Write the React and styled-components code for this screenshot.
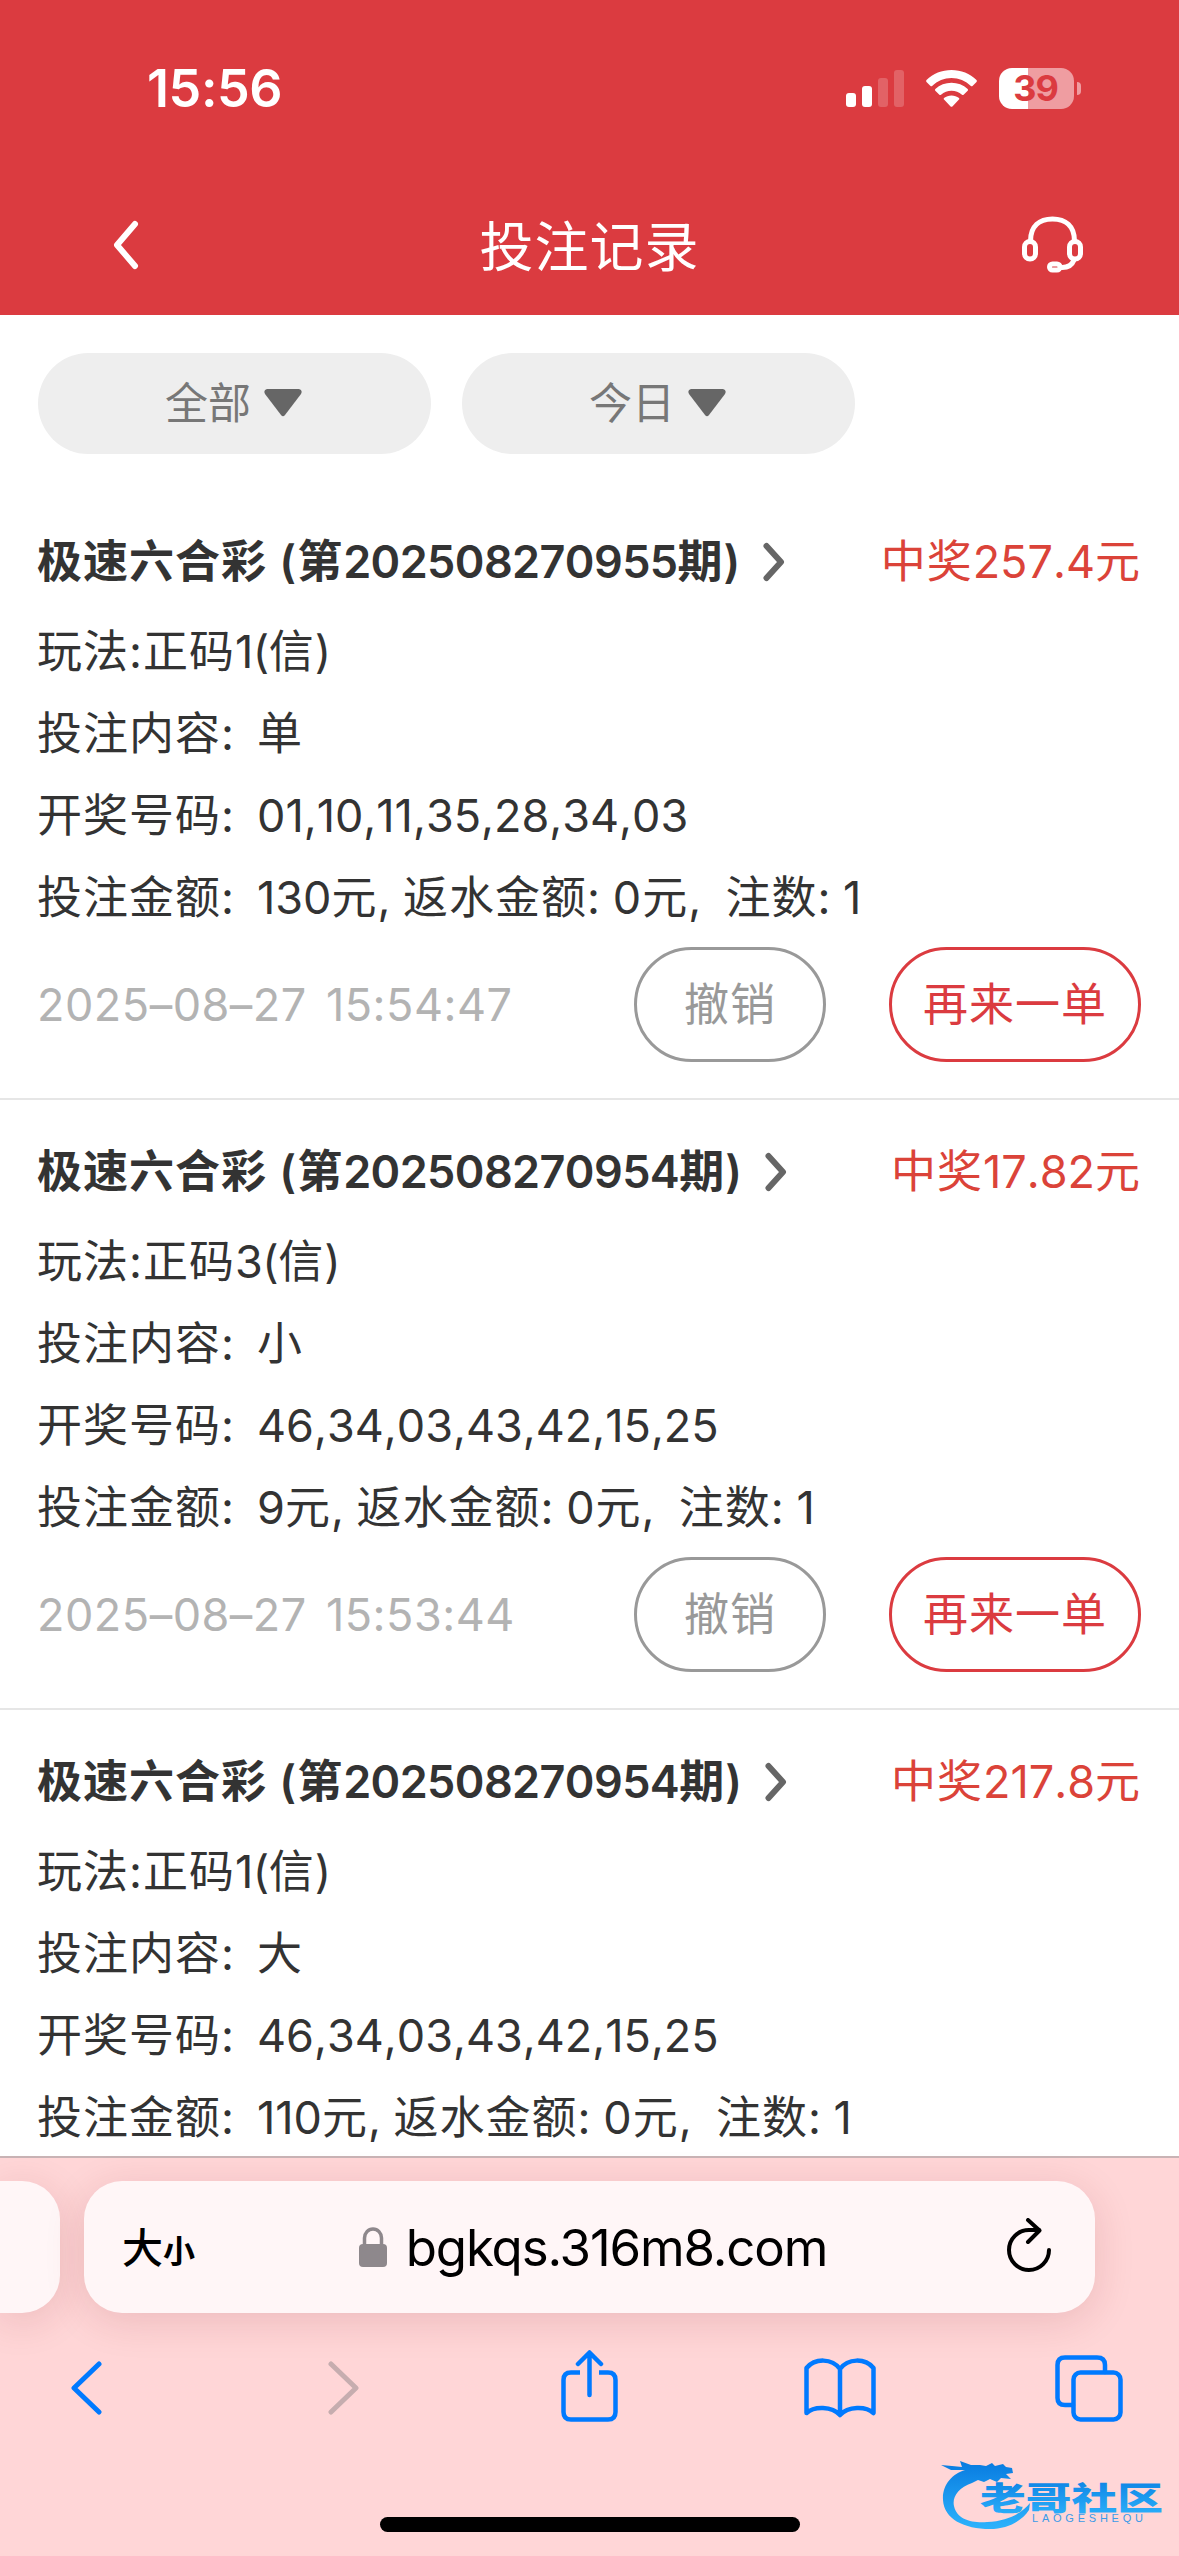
import styled, { createGlobalStyle } from "styled-components";

const GlobalStyle = createGlobalStyle`
  * {
    box-sizing: border-box;
  }
  body {
    margin: 0;
    background: #fff;
    font-family: Inter, "Noto Sans CJK SC", sans-serif;
    font-feature-settings: "calt" 0;
    color: #333;
  }
`;

const Screen = styled.div`
  position: relative;
  width: 1179px;
  height: 2556px;
  display: flex;
  flex-direction: column;
  overflow: hidden;
  background: #fff;
`;

const Header = styled.header`
  height: 315px;
  flex-shrink: 0;
  background: #db3b40;
  color: #fff;
`;

const StatusBar = styled.div`
  height: 176px;
  padding: 0 98px 0 147px;
  display: flex;
  align-items: center;
  justify-content: space-between;
`;

const Clock = styled.span`
  font-size: 52px;
  font-weight: 600;
  line-height: 60px;
  letter-spacing: -0.4px;
  padding-top: 2px;
`;

const StatusIcons = styled.div`
  display: flex;
  align-items: center;
  gap: 22px;
`;

const Signal = styled.div`
  display: flex;
  align-items: flex-end;
  gap: 6px;
  height: 37px;
`;

const Bar = styled.i`
  width: 10px;
  height: ${(p) => p.$h}px;
  border-radius: 3px;
  background: ${(p) => (p.$on ? "#fff" : "rgba(255, 255, 255, 0.2)")};
`;

const BatteryWrap = styled.div`
  display: flex;
  align-items: center;
  gap: 3px;
`;

const Battery = styled.div`
  width: 75px;
  height: 41px;
  padding-right: 2px;
  border-radius: 13px;
  background: linear-gradient(to right, #fff 29px, #ef9da1 29px);
  color: #db3b40;
  font-size: 36px;
  font-weight: 700;
  line-height: 41px;
  letter-spacing: -1px;
  text-align: center;
`;

const BatteryTip = styled.i`
  width: 4px;
  height: 13px;
  border-radius: 0 4px 4px 0;
  background: #ef9da1;
`;

const NavBar = styled.div`
  height: 139px;
  padding: 0 96px;
  display: grid;
  grid-template-columns: 1fr auto 1fr;
  align-items: center;
`;

const NavLeft = styled.div`
  display: flex;
  padding: 0 0 2px 16px;
`;

const NavTitle = styled.h1`
  margin: 0;
  padding-top: 4px;
  font-size: 54px;
  font-weight: 400;
  line-height: 64px;
  letter-spacing: 1px;
`;

const NavRight = styled.div`
  display: flex;
  justify-content: flex-end;
  padding-bottom: 2px;
`;

const Main = styled.main`
  height: 1841px;
  flex-shrink: 0;
  overflow: hidden;
`;

const Filters = styled.div`
  display: flex;
  gap: 31px;
  padding: 38px 38px 0;
`;

const FilterPill = styled.div`
  width: 393px;
  height: 101px;
  padding: 0 2px 2px 0;
  border-radius: 51px;
  background: #eee;
  color: #777;
  display: flex;
  align-items: center;
  justify-content: center;
  gap: 13px;
  font-size: 43px;
  line-height: 50px;
`;

const Records = styled.div`
  padding-top: 36px;
`;

const Card = styled.section`
  height: 610px;
  padding: 22px 38px 0 37px;
  border-bottom: 2px solid #e6e6e6;
  font-size: 45px;
  letter-spacing: 1px;
  line-height: 82px;
`;

const CardHead = styled.div`
  height: 99px;
  display: flex;
  align-items: center;
  line-height: 60px;
`;

const Game = styled.strong`
  font-weight: 600;
  white-space: pre;
`;

const Digits = styled.span`
  letter-spacing: ${(p) => p.$track || 0}px;
  font-kerning: none;
`;

const Arrow = styled.span`
  display: flex;
  margin-left: 22px;
`;

const Prize = styled.span`
  margin-left: auto;
  color: #db4339;
`;

const Line = styled.div`
  height: 82px;
  display: flex;
  white-space: pre;
  word-spacing: -2px;
`;

const Label = styled.span`
  width: 220px;
`;

const CardFoot = styled.div`
  height: 115px;
  margin-top: 8px;
  display: flex;
  align-items: center;
`;

const Time = styled.time`
  color: #b3b3b3;
  margin-right: auto;
  letter-spacing: 0.5px;
  word-spacing: 6px;
  white-space: pre;
`;

const Button = styled.button`
  width: ${(p) => p.$w}px;
  height: 115px;
  padding: 0;
  margin-left: 63px;
  border: 3px solid currentColor;
  border-radius: 58px;
  background: #fff;
  color: ${(p) => p.$color};
  font: inherit;
  letter-spacing: inherit;
`;

const Browser = styled.footer`
  flex: 1;
  border-top: 2px solid #c9b3b5;
  background: #ffd6d7;
  display: flex;
  flex-direction: column;
  align-items: center;
`;

const AddressRow = styled.div`
  align-self: stretch;
  display: flex;
  gap: 24px;
  padding-top: 23px;
`;

const TabPeek = styled.div`
  width: 60px;
  height: 132px;
  border-radius: 0 38px 38px 0;
  background: #fff6f7;
  box-shadow: 0 8px 40px rgba(120, 20, 30, 0.14);
`;

const AddressBar = styled.div`
  width: 1011px;
  height: 132px;
  padding: 0 43px 0 38px;
  border-radius: 38px;
  background: #fff6f7;
  box-shadow: 0 8px 40px rgba(120, 20, 30, 0.14);
  display: grid;
  grid-template-columns: 1fr auto 1fr;
  align-items: center;
  color: #000;
`;

const TextSize = styled.span`
  padding-top: 6px;
  font-size: 41px;
  font-weight: 500;
  line-height: 50px;
`;

const Small = styled.span`
  font-size: 32px;
  font-weight: 700;
`;

const Url = styled.div`
  display: flex;
  align-items: center;
  gap: 19px;
  margin-left: 12px;
  font-size: 51px;
  letter-spacing: -1.15px;
`;

const Toolbar = styled.div`
  align-self: stretch;
  height: 150px;
  padding: 0 53px;
  display: flex;
  align-items: center;
  justify-content: space-between;
`;

const Tool = styled.div`
  width: 72px;
  display: flex;
  justify-content: center;
  padding: ${(p) => p.$pad || 0};
`;

const HomeIndicator = styled.div`
  width: 420px;
  height: 15px;
  margin-top: 54px;
  border-radius: 8px;
  background: #000;
`;

const Watermark = styled.div`
  position: absolute;
  left: 940px;
  top: 2456px;
`;

const Icon = styled.svg`
  flex-shrink: 0;
`;

const Stroke = ({ w, h, color = "currentColor", width = 5, children }) => (
  <Icon
    width={w}
    height={h}
    viewBox={`0 0 ${w} ${h}`}
    fill="none"
    stroke={color}
    strokeWidth={width}
    strokeLinecap="round"
    strokeLinejoin="round"
  >
    {children}
  </Icon>
);

const Wifi = () => (
  <svg width="51" height="37" viewBox="0 0 51 37" fill="#fff">
    <path d="M25.500 0C35 0 44 3.500 50.500 10Q51.200 11 50.500 12L46.500 16Q45.700 16.600 44.900 16C39.500 10.800 32.800 8 25.500 8S11.500 10.800 6.100 16Q5.300 16.600 4.500 16L.5 12Q-.2 11 .5 10C7 3.500 16 0 25.500 0Z" />
    <path d="M25.500 12.800C31.500 12.800 37.300 15 41.700 19Q42.400 19.900 41.700 20.800L37.600 24.800Q36.800 25.400 36 24.800C33 22.300 29.400 20.800 25.500 20.800S18 22.300 15 24.800Q14.200 25.400 13.400 24.800L9.300 20.800Q8.600 19.900 9.300 19C13.700 15 19.500 12.800 25.500 12.800Z" />
    <path d="M25.500 25.400C28.300 25.400 30.900 26.300 33 28Q33.600 28.800 33 29.600L26.400 36.400Q25.500 37.200 24.600 36.400L18 29.600Q17.400 28.800 18 28C20.100 26.300 22.700 25.400 25.500 25.400Z" />
  </svg>
);

const Headset = () => (
  <Stroke w={61} h={58}>
    <path d="M8.500 25C8.500 10 17.500 3 30.500 3S52.500 10 52.500 25" />
    <rect x="2.500" y="25.500" width="11" height="17.500" rx="5.500" />
    <rect x="47.500" y="25.500" width="11" height="17.500" rx="5.500" />
    <path d="M52 44C50 49 45 52 38.500 51.500" />
    <rect x="27.500" y="48" width="10.500" height="6" rx="3" />
  </Stroke>
);

const Triangle = () => (
  <svg width="38" height="28" viewBox="0 0 38 28" fill="#666">
    <path d="M3 0H35Q39 1 37 5L21 26Q19 28.500 17 26L1 5Q-1 1 3 0Z" />
  </svg>
);

const Logo = () => (
  <svg width="230" height="80" viewBox="0 0 230 80">
    <defs>
      <linearGradient id="blue" x1="0" y1="0" x2="0" y2="1">
        <stop offset="0" stopColor="#087be0" />
        <stop offset="1" stopColor="#2db3fc" />
      </linearGradient>
    </defs>
    <path
      fill="url(#blue)"
      d="M1 9L12 10 22 11 20 5 31 9 40 9 46 10 52 7 55 10 63 8 66 11 72 12 73 17 66 18 71 23 61 22 57 26 50 23 44 26 38 24 32 27C18 32 12 41 14 50C17 64 32 67 47 66C69 65 83 56 90 47L89 54C82 65 67 73 50 73C24 73 4 63 3 44C2 29 12 18 25 14L11 14Z"
    />
    <text
      x="40"
      y="53.5"
      fill="url(#blue)"
      fontFamily="Noto Sans CJK SC"
      fontWeight="900"
      fontSize="32"
      textLength="183"
      lengthAdjust="spacingAndGlyphs"
    >
      老哥社区
    </text>
    <text
      x="92"
      y="66"
      fill="#3b9be8"
      fontFamily="Liberation Sans"
      fontSize="11"
      textLength="111"
    >
      LAOGESHEQU
    </text>
  </svg>
);

const records = [
  {
    issue: "202508270955",
    prize: "257.4",
    play: ["正码", "1"],
    pick: "单",
    numbers: "01,10,11,35,28,34,03",
    amount: "130",
    time: "2025–08–27 15:54:47",
  },
  {
    issue: "202508270954",
    prize: "17.82",
    play: ["正码", "3"],
    pick: "小",
    numbers: "46,34,03,43,42,15,25",
    amount: "9",
    time: "2025–08–27 15:53:44",
  },
  {
    issue: "202508270954",
    prize: "217.8",
    play: ["正码", "1"],
    pick: "大",
    numbers: "46,34,03,43,42,15,25",
    amount: "110",
  },
];

const Record = ({ item }) => (
  <Card>
    <CardHead>
      <Game>
        极速六合彩 (第<Digits $track={-0.6}>{item.issue}</Digits>期)
      </Game>
      <Arrow>
        <Stroke w={22} h={40} color="#666" width={6}>
          <path d="M3.500 4L18 20L3.500 36" />
        </Stroke>
      </Arrow>
      <Prize>
        中奖<Digits>{item.prize}</Digits>元
      </Prize>
    </CardHead>
    <Line>
      玩法:{item.play[0]}
      <Digits $track={-0.5}>{item.play[1]}(</Digits>信)
    </Line>
    <Line>
      <Label>投注内容:</Label>
      {item.pick}
    </Line>
    <Line>
      <Label>开奖号码:</Label>
      <Digits>{item.numbers}</Digits>
    </Line>
    <Line>
      <Label>投注金额:</Label>
      <Digits>{item.amount}</Digits>元, 返水金额: 0元,{"  "}注数: 1
    </Line>
    {item.time && (
      <CardFoot>
        <Time>{item.time}</Time>
        <Button $w={192} $color="#999">
          撤销
        </Button>
        <Button $w={252} $color="#db3b40">
          再来一单
        </Button>
      </CardFoot>
    )}
  </Card>
);

const App = () => (
  <Screen>
    <GlobalStyle />
    <Header>
      <StatusBar>
        <Clock>15:56</Clock>
        <StatusIcons>
          <Signal>
            <Bar $h={14} $on />
            <Bar $h={21} $on />
            <Bar $h={29} />
            <Bar $h={37} />
          </Signal>
          <Wifi />
          <BatteryWrap>
            <Battery>39</Battery>
            <BatteryTip />
          </BatteryWrap>
        </StatusIcons>
      </StatusBar>
      <NavBar>
        <NavLeft>
          <Stroke w={27} h={50} width={6}>
            <path d="M23 4L5 25L23 46" />
          </Stroke>
        </NavLeft>
        <NavTitle>投注记录</NavTitle>
        <NavRight>
          <Headset />
        </NavRight>
      </NavBar>
    </Header>
    <Main>
      <Filters>
        <FilterPill>
          全部
          <Triangle />
        </FilterPill>
        <FilterPill>
          今日
          <Triangle />
        </FilterPill>
      </Filters>
      <Records>
        {records.map((item, i) => (
          <Record key={i} item={item} />
        ))}
      </Records>
    </Main>
    <Browser>
      <AddressRow>
        <TabPeek />
        <AddressBar>
          <TextSize>
            大<Small>小</Small>
          </TextSize>
          <Url>
            <svg width="28" height="40" viewBox="0 0 28 40">
              <rect y="17" width="28" height="23" rx="4" fill="#8e888c" />
              <path
                d="M5.500 18V11a8.500 9 0 0 1 17 0V18"
                fill="none"
                stroke="#8e888c"
                strokeWidth="3.500"
              />
            </svg>
            bgkqs.316m8.com
          </Url>
          <NavRight>
            <Stroke w={45} h={56} width={4}>
              <path d="M42 32A20 20 0 1 1 22 12H32" />
              <path d="M21 2L32.500 12.500L21 24" />
            </Stroke>
          </NavRight>
        </AddressBar>
      </AddressRow>
      <Toolbar>
        <Tool $pad="0 5px 0 0">
          <Stroke w={31} h={54} color="#007aff">
            <path d="M28 3L3 27L28 51" />
          </Stroke>
        </Tool>
        <Tool $pad="0 0 0 8px">
          <Stroke w={31} h={54} color="#c6adaf">
            <path d="M3 3L28 27L3 51" />
          </Stroke>
        </Tool>
        <Tool $pad="0 1px 4px 0">
          <Stroke w={57} h={72} color="#007aff" width={4.5}>
            <path
              d="M19 22.500H10Q2.500 22.500 2.500 30V62Q2.500 69.500 10 69.500H47Q54.500 69.500 54.500 62V30Q54.500 22.500 47 22.500H38"
              strokeLinecap="butt"
            />
            <path d="M28.500 45V3M17 14L28.500 2.500L40 14" />
          </Stroke>
        </Tool>
        <Tool>
          <Stroke w={72} h={60} color="#007aff" width={4.5}>
            <path d="M36 57V11C28 0 11 0 2.500 10V55C10 48 28 48 36 57C44 48 62 48 69.500 55V10C61 0 44 0 36 11" />
          </Stroke>
        </Tool>
        <Tool $pad="0 3px 0 0">
          <Stroke w={68} h={67} color="#007aff" width={4.5}>
            <rect x="18.500" y="17.500" width="47" height="47" rx="7" />
            <path d="M18 50H10Q2.500 50 2.500 43V10Q2.500 2.500 10 2.500H42Q50 2.500 50 10V17" />
          </Stroke>
        </Tool>
      </Toolbar>
      <HomeIndicator />
    </Browser>
    <Watermark>
      <Logo />
    </Watermark>
  </Screen>
);

export default App;
